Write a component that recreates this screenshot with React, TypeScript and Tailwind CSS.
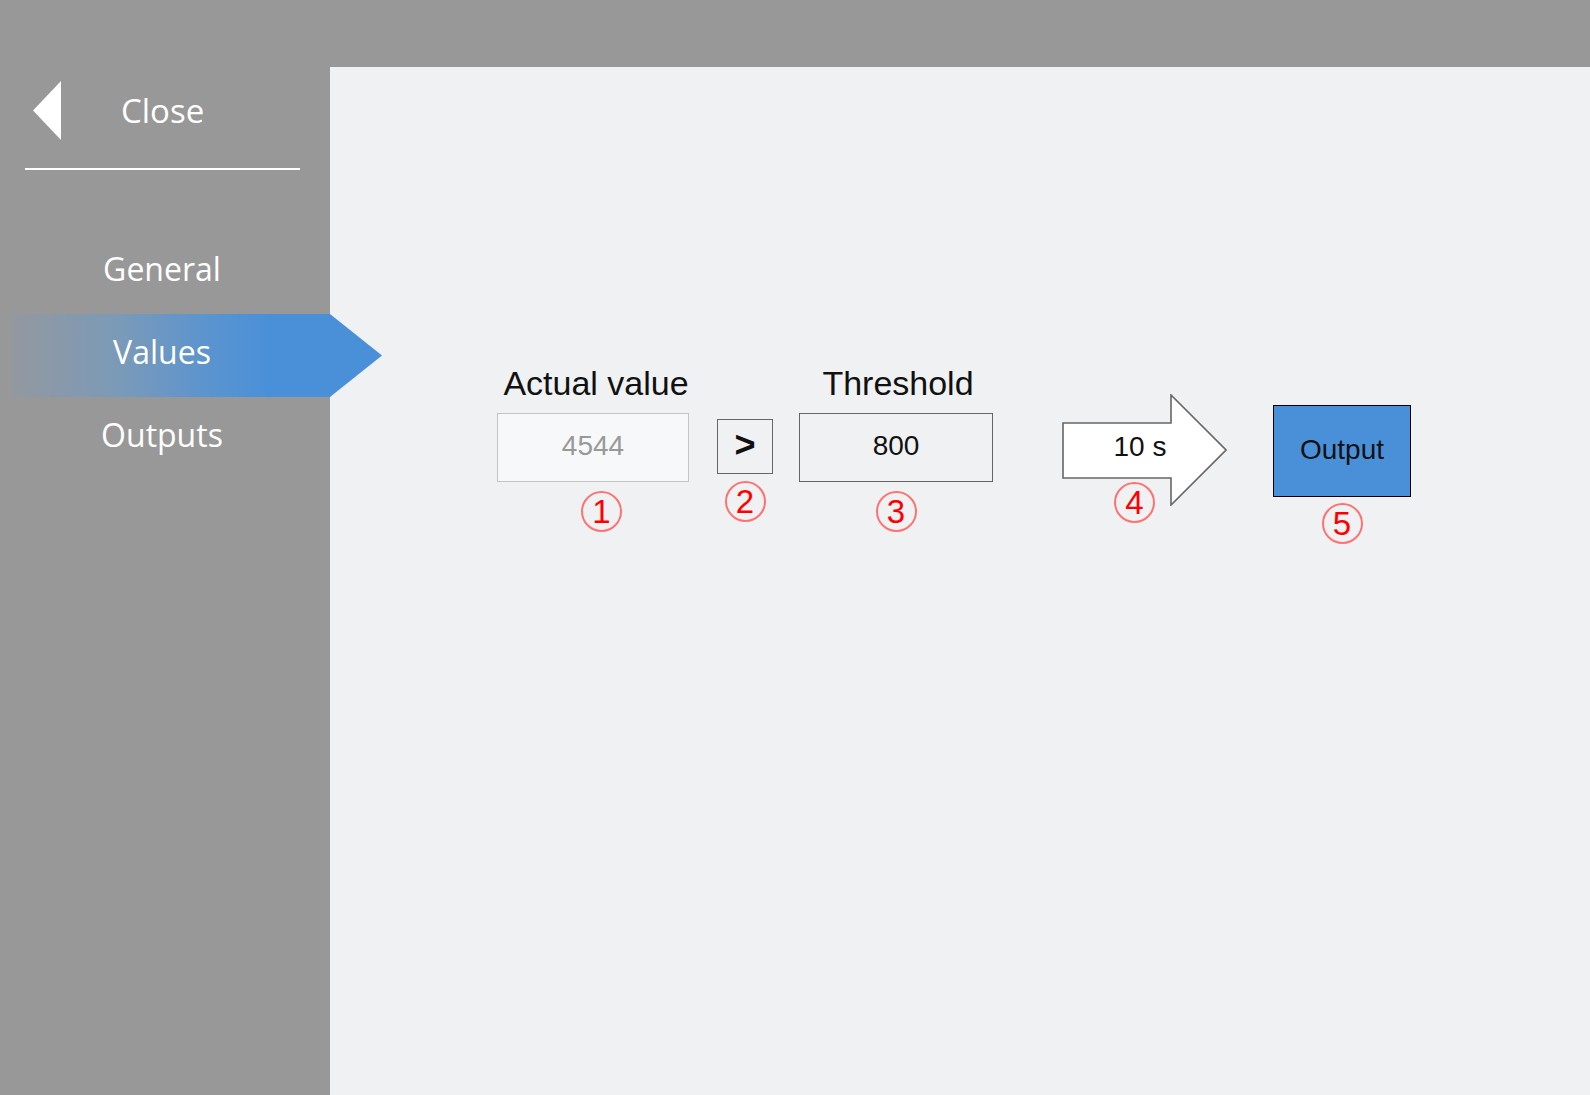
import React from "react";

const Badge: React.FC<{ n: number; className?: string }> = ({ n, className = "" }) => (
  <div
    className={`w-[41px] h-[41px] rounded-full border-2 border-[#ff7272] flex items-center justify-center text-[33px] leading-none text-[#ff0000] ${className}`}
    style={{ fontFamily: '"Liberation Sans", Arial, sans-serif' }}
  >
    {n}
  </div>
);

const App: React.FC = () => {
  const navItems = ["General", "Values", "Outputs"];

  return (
    <div className="w-full h-[1095px] bg-[#989898] flex overflow-hidden">
      {/* Sidebar */}
      <aside
        className="w-[330px] shrink-0 flex flex-col pt-[81px] text-white"
        style={{ fontFamily: '"Open Sans", "Noto Sans", sans-serif' }}
      >
        <div className="flex items-center h-[59px]">
          <svg width="28" height="59" viewBox="0 0 28 59" className="ml-[33px]">
            <polygon points="28,0 0,29.5 28,59" fill="#ffffff" />
          </svg>
          <span className="ml-[60px] text-[33px] leading-[42px]">Close</span>
        </div>
        <div className="mt-[28px] ml-[25px] w-[275px] h-[2px] bg-white" />

        <nav className="mt-[61px] flex flex-col">
          {navItems.map((item) =>
            item === "Values" ? (
              <div key={item} className="relative z-10 h-[83px] w-[382px]">
                <div className="absolute inset-0 [clip-path:polygon(0_0,330px_0,382px_50%,330px_100%,0_100%)] bg-[linear-gradient(to_right,#989898_2%,#9298a0_4%,#7b9ab8_31%,#5a94cf_55%,#4a90d9_70%,#4a90d9_100%)]" />
                <div className="relative w-[324px] pt-[17px] text-center text-[32px] leading-[42px]">
                  {item}
                </div>
              </div>
            ) : (
              <div key={item} className="h-[83px] w-[324px] pt-[17px] text-center text-[32px] leading-[42px]">
                {item}
              </div>
            )
          )}
        </nav>
      </aside>

      {/* Main panel */}
      <main
        className="flex-1 mt-[67px] bg-[#f0f1f3] text-[#111]"
        style={{ fontFamily: '"Liberation Sans", Arial, sans-serif' }}
      >
        <div className="flex items-start pl-[167px] pt-[296px]">
          {/* 1 - actual value */}
          <div className="w-[192px] flex flex-col items-center">
            <div className="ml-[6px] text-[34px] leading-[40px] whitespace-nowrap">Actual value</div>
            <div className="mt-[10px] w-full h-[69px] bg-[#f7f8fa] border border-[#c4c4c4] flex items-center justify-center pb-[3px] text-[28px] text-[#999]">
              4544
            </div>
            <Badge n={1} className="mt-[9px] ml-[17px]" />
          </div>

          {/* 2 - comparator */}
          <div className="ml-[28px] mt-[56px] flex flex-col items-center">
            <div className="w-[56px] h-[55px] border border-[#666] flex items-center justify-center pb-[4px] text-[36px] font-bold leading-none">
              &gt;
            </div>
            <Badge n={2} className="mt-[7px]" />
          </div>

          {/* 3 - threshold */}
          <div className="ml-[26px] w-[194px] flex flex-col items-center">
            <div className="ml-[4px] text-[34px] leading-[40px] whitespace-nowrap">Threshold</div>
            <div className="mt-[10px] w-full h-[69px] border border-[#666] flex items-center justify-center pb-[3px] text-[28px]">
              800
            </div>
            <Badge n={3} className="mt-[9px]" />
          </div>

          {/* 4 - delay arrow */}
          <div className="relative ml-[69px] mt-[31px] w-[165px] h-[112px]">
            <svg width="165" height="112" viewBox="0 0 165 112" className="absolute inset-0">
              <polygon
                points="1,29 109,29 109,1 164,56 109,111 109,84 1,84"
                fill="#ffffff"
                stroke="#666666"
                strokeWidth="1.6"
                strokeLinejoin="miter"
              />
            </svg>
            <div className="absolute left-0 top-0 w-[156px] h-[106px] flex items-center justify-center text-[28px]">
              10 s
            </div>
            <Badge n={4} className="absolute left-[52px] top-[88px]" />
          </div>

          {/* 5 - output */}
          <div className="ml-[46px] mt-[42px] flex flex-col items-center">
            <div className="w-[138px] h-[92px] bg-[#4a90d9] border border-black flex items-center justify-center pb-[3px] text-[28px]">
              Output
            </div>
            <Badge n={5} className="mt-[6px]" />
          </div>
        </div>
      </main>
    </div>
  );
};

export default App;
